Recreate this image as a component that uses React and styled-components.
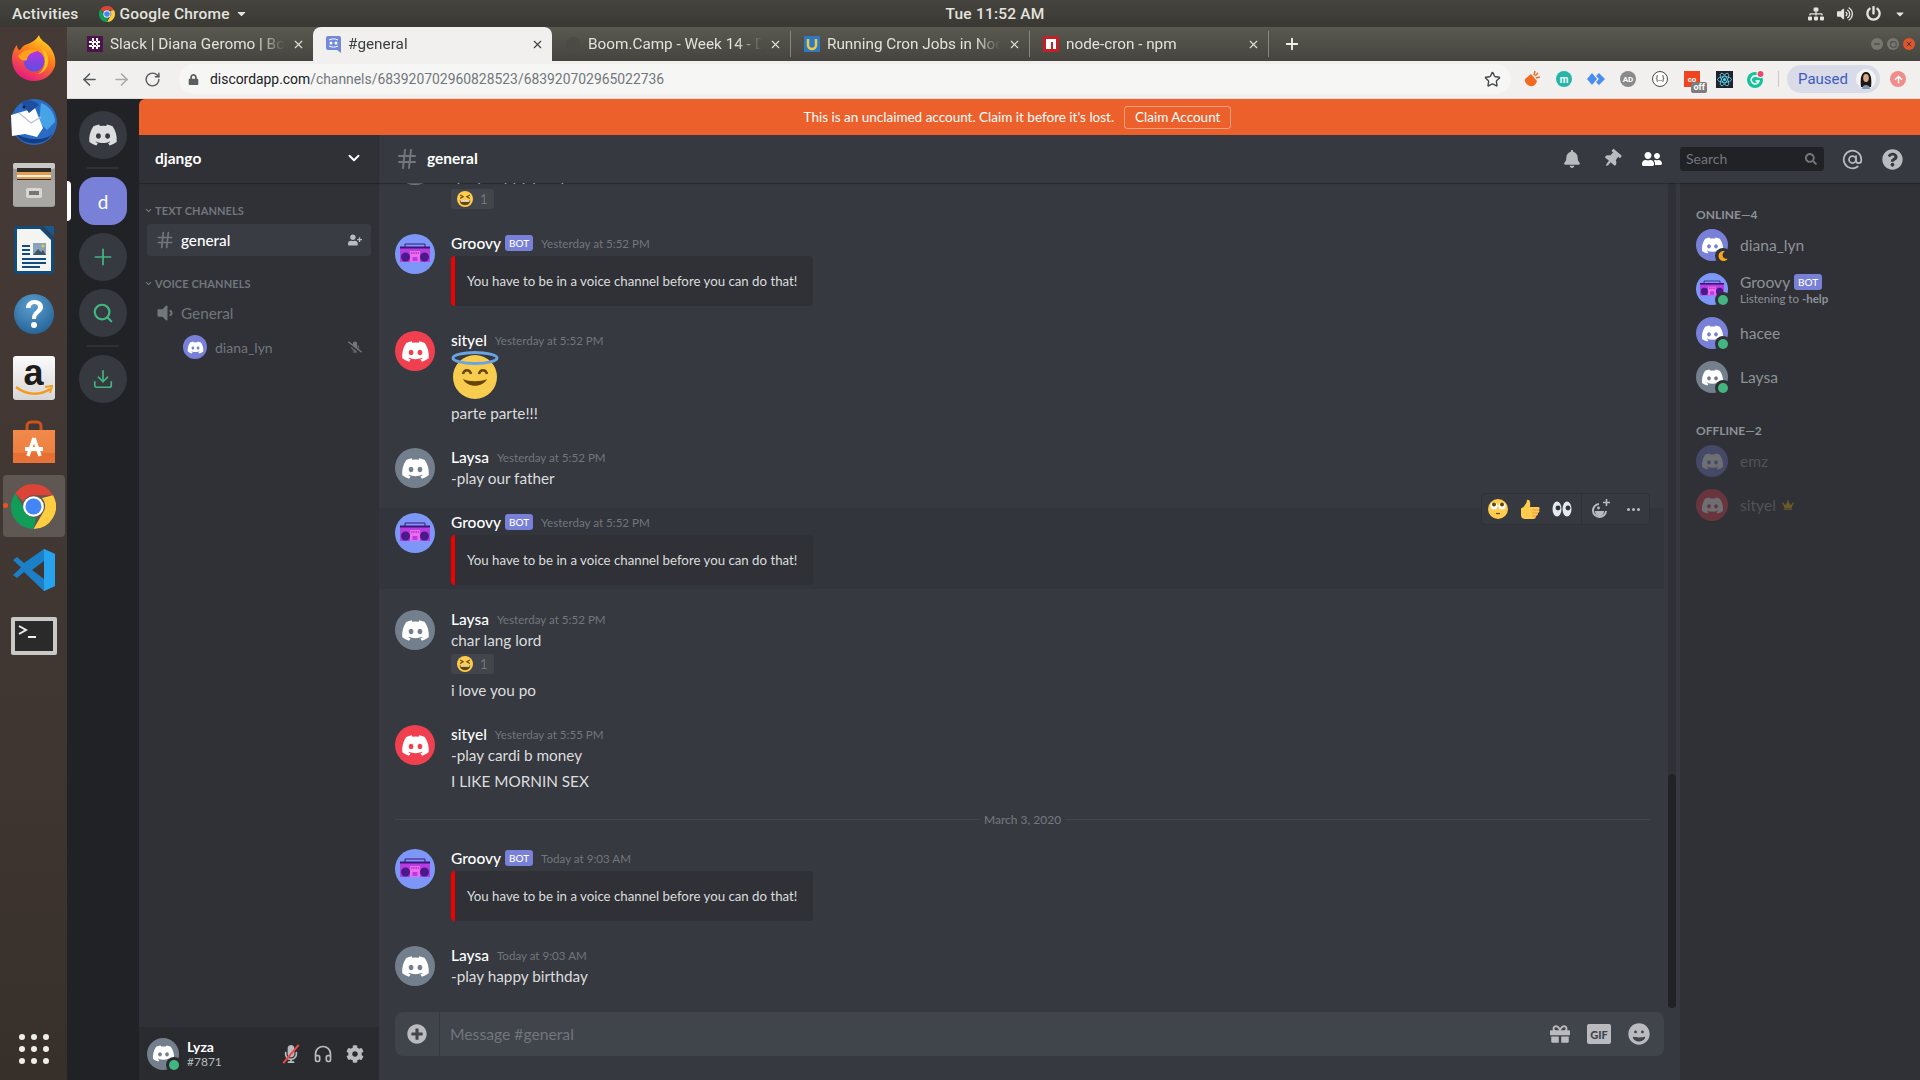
import React from 'react';
import styled, { createGlobalStyle } from 'styled-components';
import {
  FaDiscord, FaBell, FaThumbtack, FaUserFriends, FaSearch, FaQuestionCircle, FaGift, FaGrin,
  FaPlusCircle, FaCog, FaMicrophone, FaMicrophoneSlash, FaVolumeDown, FaVolumeUp, FaUserPlus, FaCrown, FaMoon,
  FaLock, FaCaretDown, FaPowerOff, FaSitemap, FaArrowUp,
} from 'react-icons/fa';
import {
  Hash, ArrowLeft, ArrowRight, RotateCw, ChevronDown, Star, Plus, X, Minus, Square, Headphones, AtSign, Download, Search,
} from 'lucide-react';

const UI = '"Lato", "Noto Sans", sans-serif';
const CHROME = 'Roboto, "Noto Sans", sans-serif';

const Global = createGlobalStyle`
  html, body { margin: 0; padding: 0; background: #202225; }
  * { box-sizing: border-box; }
`;

const Screen = styled.div`
  width: 1920px;
  height: 1080px;
  display: flex;
  flex-direction: column;
  overflow: hidden;
`;

/* ubuntu top bar */
const TopBar = styled.div`
  height: 27px;
  flex: none;
  display: flex;
  align-items: center;
  padding: 0 12px;
  background: linear-gradient(#45443e, #393833);
  color: #e4e3df;
  font: 500 15.500px ${CHROME};
  letter-spacing: .2px;
  position: relative;
`;
const TopAppName = styled.span`
  display: flex;
  align-items: center;
  gap: 5px;
  margin-left: 20px;
`;
const TopClock = styled.span`
  position: absolute;
  left: 938px;
  width: 114px;
  text-align: center;
`;
const TopTray = styled.div`
  margin-left: auto;
  display: flex;
  align-items: center;
  gap: 13px;
  color: #e4e3df;
  margin-right: 2px;
`;

const Desktop = styled.div`
  flex: 1;
  min-height: 0;
  display: flex;
`;

/* launcher */
const Dock = styled.div`
  width: 67px;
  flex: none;
  display: flex;
  flex-direction: column;
  align-items: center;
  gap: 2px;
  padding-bottom: 16px;
  background: linear-gradient(#453a36, #3f3531 70%, #37302a);
`;
const DockItem = styled.div`
  width: 62px;
  height: 62px;
  flex: none;
  display: flex;
  align-items: center;
  justify-content: center;
  border-radius: 4px;
  position: relative;
  margin-top: ${p => p.$top || 0}px;
  background: ${p => (p.$active ? 'rgba(255,255,255,.16)' : 'transparent')};
`;
const RunDot = styled.span`
  position: absolute;
  left: 0;
  top: 28px;
  width: 5px;
  height: 5px;
  border-radius: 50%;
  background: #e95420;
`;
const AppGrid = styled.div`
  margin-top: auto;
  display: grid;
  grid-template-columns: repeat(3, 6px);
  gap: 6px;
`;
const AppGridDot = styled.span`
  width: 6px;
  height: 6px;
  border-radius: 50%;
  background: #efeee9;
`;

const Browser = styled.div`
  flex: 1;
  min-width: 0;
  display: flex;
  flex-direction: column;
`;

/* chrome tabs */
const TabStrip = styled.div`
  height: 34px;
  flex: none;
  display: flex;
  align-items: stretch;
  padding-left: 7px;
  background: linear-gradient(#5a5950, #45443e);
  position: relative;
`;
const Tab = styled.div`
  width: 239px;
  flex: none;
  display: flex;
  align-items: center;
  gap: 7px;
  padding: 0 8px 0 13px;
  color: ${p => (p.$active ? '#3c4043' : '#e2e1dc')};
  font: 400 15.300px ${CHROME};
  background: ${p => (p.$active ? '#f1f0ee' : 'transparent')};
  border-radius: ${p => (p.$active ? '8px 8px 0 0' : '0')};
  border-right: ${p => (p.$sep ? '1px solid #88877f' : 'none')};
  margin: ${p => (p.$sep ? '4px 0' : '0')};
`;
const TabTitle = styled.span`
  flex: 1;
  min-width: 0;
  white-space: nowrap;
  overflow: hidden;
  -webkit-mask-image: linear-gradient(90deg, #000 85%, transparent);
  mask-image: linear-gradient(90deg, #000 85%, transparent);
`;
const NewTab = styled.div`
  width: 46px;
  display: flex;
  align-items: center;
  justify-content: center;
  color: #f1f0ee;
`;
const WindowButtons = styled.div`
  margin-left: auto;
  display: flex;
  align-items: center;
  gap: 4px;
  padding-right: 5px;
`;
const WindowButton = styled.span`
  width: 12px;
  height: 12px;
  border-radius: 50%;
  display: flex;
  align-items: center;
  justify-content: center;
  color: #3c3b37;
  background: ${p => p.$bg || '#77766f'};
`;

/* chrome toolbar */
const Toolbar = styled.div`
  height: 38px;
  flex: none;
  display: flex;
  align-items: center;
  padding: 0 0 1px 13px;
  background: #f1f0ee;
  color: #5f6368;
  border-bottom: 1px solid #dcdbd8;
`;
const NavButton = styled.span`
  width: 32px;
  display: flex;
  color: ${p => (p.$dim ? '#a9a9a9' : '#55585c')};
`;
const Omnibox = styled.div`
  width: 1332px;
  height: 30px;
  margin-left: 3px;
  display: flex;
  align-items: center;
  gap: 11px;
  padding: 0 10px 0 9px;
  border-radius: 15px;
  background: #f6f6f5;
  font: 400 13.900px ${CHROME};
  color: #72777c;
`;
const UrlHost = styled.span`
  color: #202124;
`;
const OmniStar = styled.span`
  margin-left: auto;
  display: flex;
  color: #45484c;
`;
const Extensions = styled.div`
  display: flex;
  align-items: center;
  margin-left: 5px;
`;
const Extension = styled.span`
  width: 32px;
  height: 20px;
  display: flex;
  align-items: center;
  justify-content: center;
  position: relative;
`;
const ExtensionDisc = styled.span`
  width: 16px;
  height: 16px;
  border-radius: 50%;
  display: flex;
  align-items: center;
  justify-content: center;
  background: ${p => p.$bg};
  color: ${p => p.$fg || '#fff'};
  border: ${p => (p.$ring ? '1.5px solid #4a4a4a' : 'none')};
  font: 700 ${p => p.$size || 10}px ${CHROME};
`;
const ExtensionSquare = styled(ExtensionDisc)`
  border-radius: 0;
`;
const OffBadge = styled.span`
  position: absolute;
  right: 1px;
  bottom: -4px;
  background: #7d7d7d;
  color: #fff;
  font: 700 9px ${CHROME};
  padding: 0 2px;
  border-radius: 2px;
  line-height: 11px;
`;
const ToolbarDivider = styled.span`
  width: 1px;
  height: 16px;
  margin: 0 8px 0 6px;
  background: #c9c8c5;
`;
const ProfilePill = styled.div`
  width: 93px;
  height: 28px;
  border-radius: 14px;
  display: flex;
  align-items: center;
  justify-content: space-between;
  padding: 0 4px 0 11px;
  background: #dadbe9;
  color: #3c5bc4;
  font: 400 15px ${CHROME};
`;
const UpdateButton = styled.span`
  width: 16px;
  height: 16px;
  margin-left: 10px;
  border-radius: 50%;
  background: #ee8d8a;
  color: #fff;
  display: flex;
  align-items: center;
  justify-content: center;
`;

/* discord */
const Discord = styled.div`
  flex: 1;
  min-height: 0;
  display: flex;
  background: #202225;
  font-family: ${UI};
`;
const GuildBar = styled.div`
  width: 72px;
  flex: none;
  display: flex;
  flex-direction: column;
  align-items: center;
  padding-top: 12px;
  position: relative;
`;
const GuildIcon = styled.div`
  width: 48px;
  height: 48px;
  flex: none;
  margin-bottom: ${p => p.$gap ?? 8}px;
  border-radius: ${p => (p.$selected ? '16px' : '50%')};
  background: ${p => (p.$selected ? '#7880d8' : '#36393f')};
  color: ${p => p.$fg || '#dcddde'};
  display: flex;
  align-items: center;
  justify-content: center;
  font-size: 19px;
  position: relative;
`;
const GuildPill = styled.span`
  position: absolute;
  left: -12px;
  top: 4px;
  width: 4px;
  height: 40px;
  border-radius: 0 4px 4px 0;
  background: #fff;
`;
const GuildSeparator = styled.div`
  width: 32px;
  height: 2px;
  margin: 0 0 ${p => p.$after}px;
  flex: none;
  background: #2f3136;
`;

const Workspace = styled.div`
  flex: 1;
  min-width: 0;
  display: flex;
  flex-direction: column;
  border-top-left-radius: 6px;
  overflow: hidden;
  background: #36393f;
`;
const Banner = styled.div`
  height: 36px;
  flex: none;
  display: flex;
  align-items: center;
  justify-content: center;
  gap: 10px;
  padding-right: 24px;
  background: #ec602c;
  color: #fff;
  font-size: 13.500px;
`;
const BannerButton = styled.span`
  height: 23px;
  padding: 0 10px;
  display: flex;
  align-items: center;
  border: 1px solid rgba(255,255,255,.4);
  border-radius: 3px;
`;
const Columns = styled.div`
  flex: 1;
  min-height: 0;
  display: flex;
`;

/* channel list */
const Sidebar = styled.div`
  width: 240px;
  flex: none;
  display: flex;
  flex-direction: column;
  background: #2f3136;
`;
const GuildHeader = styled.div`
  height: 48px;
  flex: none;
  display: flex;
  align-items: center;
  justify-content: space-between;
  padding: 0 16px 2px;
  color: #fff;
  font-size: 15.500px;
  font-weight: 700;
  box-shadow: 0 1px 0 rgba(4,4,5,.2), 0 1px 2px rgba(6,6,7,.1);
  position: relative;
`;
const ChannelScroll = styled.div`
  flex: 1;
  min-height: 0;
  padding: 19px 8px 0;
`;
const Category = styled.div`
  display: flex;
  align-items: center;
  height: 16px;
  gap: 2px;
  margin: 0 0 6px -3px;
  color: #72767d;
  font-size: 11px;
  font-weight: 700;
  letter-spacing: .1px;
  text-transform: uppercase;
`;
const ChannelRow = styled.div`
  height: 32px;
  display: flex;
  align-items: center;
  gap: 6px;
  padding: 0 9px 1px 8px;
  border-radius: 3px;
  margin-bottom: ${p => p.$after || 0}px;
  background: ${p => (p.$selected ? '#393c43' : 'transparent')};
  color: ${p => (p.$selected ? '#fff' : '#72767d')};
  font-size: 15.300px;
  font-weight: ${p => (p.$selected ? 500 : 400)};
`;
const RowAction = styled.span`
  margin-left: auto;
  display: flex;
  color: #b9bbbe;
`;
const VoiceUser = styled.div`
  height: 28px;
  display: flex;
  align-items: center;
  gap: 8px;
  margin: 4px 0 0 36px;
  padding-right: 9px;
  color: #72767d;
  font-size: 14px;
`;
const UserPanel = styled.div`
  height: 53px;
  flex: none;
  display: flex;
  align-items: center;
  padding: 0 8px;
  gap: 8px;
  background: #292b2f;
`;
const UserText = styled.div`
  display: flex;
  flex-direction: column;
  flex: 1;
`;
const UserName = styled.span`
  color: #fff;
  font-size: 14px;
  font-weight: 700;
  line-height: 16px;
`;
const UserTag = styled.span`
  color: #b9bbbe;
  font-size: 12px;
  line-height: 14px;
`;
const UserActions = styled.div`
  display: flex;
  align-items: center;
  gap: 13px;
  margin-right: 7px;
  color: #b9bbbe;
`;
const MutedMic = styled.span`
  display: flex;
  width: 18px;
  justify-content: center;
  color: #b9bbbe;
  position: relative;
`;
const MicSlash = styled.span`
  position: absolute;
  left: 8px;
  top: -3px;
  width: 2px;
  height: 24px;
  background: #f04747;
  transform: rotate(40deg);
`;

/* avatar */
const Avatar = styled.div`
  width: ${p => p.$size}px;
  height: ${p => p.$size}px;
  flex: none;
  border-radius: 50%;
  background: ${p => p.$bg};
  color: #fff;
  display: flex;
  align-items: center;
  justify-content: center;
  position: relative;
  opacity: ${p => p.$dim ? 0.3 : 1};
`;
const Status = styled.span`
  position: absolute;
  right: -3px;
  bottom: -3px;
  width: 16px;
  height: 16px;
  border-radius: 50%;
  background: ${p => p.$ring};
  display: flex;
  align-items: center;
  justify-content: center;
  color: #faa61a;
  &::after {
    content: '';
    display: ${p => (p.$idle ? 'none' : 'block')};
    width: 10px;
    height: 10px;
    border-radius: 50%;
    background: #43b581;
  }
`;

/* chat */
const Chat = styled.div`
  flex: 1;
  min-width: 0;
  display: flex;
  flex-direction: column;
`;
const ChatHeader = styled.div`
  height: 48px;
  flex: none;
  display: flex;
  align-items: center;
  padding: 0 16px;
  box-shadow: 0 1px 0 rgba(4,4,5,.2), 0 1px 2px rgba(6,6,7,.1);
  position: relative;
  z-index: 1;
`;
const ChannelTitle = styled.span`
  margin-left: 8px;
  padding-bottom: 2px;
  color: #fff;
  font-size: 15.500px;
  font-weight: 700;
`;
const HeaderIcons = styled.div`
  margin-left: auto;
  display: flex;
  align-items: center;
  margin-right: -8px;
`;
const HeaderIcon = styled.span`
  width: 40px;
  display: flex;
  justify-content: center;
  color: ${p => (p.$on ? '#fff' : '#b9bbbe')};
`;
const TiltedPin = styled(FaThumbtack)`
  transform: rotate(40deg);
`;
const SearchBox = styled.div`
  width: 144px;
  height: 24px;
  margin: 0 8px;
  display: flex;
  align-items: center;
  justify-content: space-between;
  padding: 0 7px 1px 6px;
  border-radius: 3px;
  background: #202225;
  color: #72767d;
  font-size: 14px;
`;
const ChatBody = styled.div`
  flex: 1;
  min-height: 0;
  display: flex;
`;
const ChatMain = styled.div`
  width: 1301px;
  flex: none;
  display: flex;
  flex-direction: column;
  position: relative;
`;
const MessageArea = styled.div`
  flex: 1;
  min-height: 0;
  display: flex;
`;
const MessageList = styled.div`
  width: 1285px;
  flex: none;
  overflow: hidden;
`;
const Track = styled.div`
  width: 8px;
  flex: none;
  margin: 0 4px 0 4px;
  display: flex;
  flex-direction: column;
  justify-content: flex-end;
  background: #2f3136;
  border-radius: 4px;
`;
const Thumb = styled.div`
  height: 234px;
  border-radius: 4px;
  background: #202225;
`;
const Group = styled.div`
  display: flex;
  gap: 16px;
  padding: 0 16px;
  margin-top: ${p => p.$top ?? 21}px;
  position: relative;
  ${p => p.$hover && 'background: #32353b; box-shadow: 0 -3px 0 #32353b, 0 2px 0 #32353b;'}
`;
const AvatarSlot = styled.div`
  padding-top: 2px;
  flex: none;
`;
const GroupContent = styled.div`
  min-width: 0;
  flex: 1;
`;
const GroupHeader = styled.div`
  height: 22px;
  display: flex;
  align-items: center;
  gap: 6px;
  padding-bottom: 1px;
`;
const AuthorName = styled.span`
  color: #fff;
  font-size: 15.500px;
  font-weight: 500;
`;
const Timestamp = styled.span`
  color: #72767d;
  font-size: 11.600px;
  margin-left: 2px;
  padding-top: 2px;
`;
const BotTag = styled.span`
  width: 28px;
  height: 16px;
  display: inline-flex;
  align-items: center;
  justify-content: center;
  border-radius: 3px;
  background: #7880d8;
  color: #fff;
  font-size: 10px;
  font-weight: 500;
`;
const AuthorBot = styled(BotTag)`
  margin-left: -2px;
`;
const Line = styled.div`
  height: 22px;
  line-height: 21px;
  color: #dcddde;
  font-size: 15.300px;
  margin-top: ${p => p.$top || 0}px;
`;
const Embed = styled.div`
  width: 362px;
  height: 50px;
  margin: 2px 0;
  padding: 0 12px;
  display: flex;
  align-items: center;
  border-left: 4px solid #f00000;
  border-radius: 4px;
  background: #2f3136;
  color: #dcddde;
  font-size: 13.250px;
  white-space: nowrap;
`;
const Reaction = styled.div`
  width: 43px;
  height: 20px;
  margin: 2px 0;
  padding-left: 6px;
  display: flex;
  align-items: center;
  gap: 7px;
  border-radius: 3px;
  background: #42454b;
  color: #72767d;
  font-size: 13px;
`;
const BigEmoji = styled.div`
  height: 48px;
  display: flex;
`;
const MessageActions = styled.div`
  position: absolute;
  right: 14px;
  top: -18px;
  width: 169px;
  height: 32px;
  display: flex;
  align-items: center;
  border-radius: 4px;
  border: 1px solid #2f3136;
  background: #36393f;
`;
const ActionSlot = styled.span`
  width: 32px;
  display: flex;
  justify-content: center;
  color: #b9bbbe;
`;
const ActionDivider = styled.span`
  width: 1px;
  height: 30px;
  margin: 0 3px 0 3px;
  background: #2f3136;
`;
const Dots = styled.span`
  display: flex;
  gap: 2px;
`;
const Dot = styled.span`
  width: 3px;
  height: 3px;
  border-radius: 50%;
  background: #b9bbbe;
`;
const DateDivider = styled.div`
  height: 16px;
  margin: 18px 14px -1px 16px;
  display: flex;
  align-items: center;
  gap: 4px;
  color: #72767d;
  font-size: 12px;
  font-weight: 500;
  &::before, &::after {
    content: '';
    flex: 1;
    height: 1px;
    background: #42454a;
  }
`;
const Composer = styled.div`
  height: 72px;
  flex: none;
  padding: 4px 16px 0;
`;
const ComposerBox = styled.div`
  height: 44px;
  display: flex;
  align-items: center;
  border-radius: 8px;
  background: #40444b;
  color: #72767d;
  font-size: 15.700px;
`;
const ComposerPlus = styled.div`
  width: 45px;
  height: 44px;
  flex: none;
  display: flex;
  align-items: center;
  justify-content: center;
  border-right: 1px solid #36393f;
  color: #b9bbbe;
`;
const ComposerText = styled.div`
  flex: 1;
  padding: 0 0 1px 10px;
`;
const ComposerIcons = styled.div`
  display: flex;
  align-items: center;
  gap: 17px;
  padding-right: 14px;
  color: #b9bbbe;
`;
const GifIcon = styled.span`
  width: 24px;
  height: 20px;
  border-radius: 2px;
  background: #b9bbbe;
  color: #40444b;
  display: flex;
  align-items: center;
  justify-content: center;
  font-size: 11px;
  font-weight: 900;
`;

/* members */
const Members = styled.div`
  width: 240px;
  flex: none;
  background: #2f3136;
  padding: 24px 8px 0;
`;
const MemberCategory = styled.div`
  height: 16px;
  line-height: 16px;
  margin: ${p => p.$top || 0}px 0 0 8px;
  color: #8e9297;
  font-size: 12px;
  font-weight: 700;
  text-transform: uppercase;
`;
const MemberRow = styled.div`
  height: 44px;
  display: flex;
  align-items: center;
  gap: 12px;
  padding-left: 8px;
`;
const MemberText = styled.div`
  display: flex;
  flex-direction: column;
  min-width: 0;
`;
const MemberName = styled.div`
  display: flex;
  align-items: center;
  gap: 4px;
  color: ${p => (p.$dim ? '#4f5258' : '#8e9297')};
  font-size: 15.600px;
  line-height: 20px;
`;
const MemberActivity = styled.div`
  color: #8e9297;
  font-size: 11.500px;
  line-height: 14px;
`;
const CrownMark = styled.span`
  display: flex;
  color: #6a5a2a;
  margin-left: 2px;
`;

/* drawings */
const Firefox = () => (
  <svg width="46" height="46" viewBox="0 0 46 46">
    <defs>
      <linearGradient id="ff1" x1=".8" y1="0" x2=".3" y2="1">
        <stop offset="0" stopColor="#ffe226" /><stop offset=".45" stopColor="#ff7a18" /><stop offset="1" stopColor="#e31587" />
      </linearGradient>
      <linearGradient id="ff2" x1="0" y1="0" x2="0" y2="1">
        <stop offset="0" stopColor="#b833e1" /><stop offset="1" stopColor="#5b4fe0" />
      </linearGradient>
    </defs>
    <path d="M28 0c1 5 6 7 10 11 6 7 7 14 6 20-3 9-11 15-21 15C10 46 1 36 1 24c0-5 2-11 5-14 0 3 1 5 3 5 2-4 6-6 8-6 5-2 9-5 11-9z" fill="url(#ff1)" />
    <circle cx="23" cy="26" r="10.500" fill="url(#ff2)" />
    <path d="M7 21c5-6 13-8 20-5-6 1-11 4-11 9-4 2-7-1-9-4z" fill="#ff9f1c" />
    <path d="M30 13c5 3 8 8 7 15-1 6-5 10-10 11 5-3 7-8 7-13 0-5-2-9-4-13z" fill="#ffc21f" />
  </svg>
);
const Thunderbird = () => (
  <svg width="50" height="50" viewBox="0 0 50 50">
    <circle cx="25" cy="25" r="23" fill="#2a6cc4" />
    <path d="M6 36C14 50 36 50 44 36 38 44 18 44 6 36z" fill="#163d83" />
    <path d="M32 6c8 3 14 10 14 19l-8 8-8-8z" fill="#47a3e8" />
    <path d="M2 18l24-7 8 20-6 9-12-3-13 2z" fill="#fff" />
    <path d="M10 16l12 10 10-6" fill="none" stroke="#b9c2ce" strokeWidth="1.2" />
    <path d="M12 5c6-3 14-2 18 3l-10 8z" fill="#1f4e9e" />
    <circle cx="15" cy="10" r="1.5" fill="#0c1e3d" />
  </svg>
);
const FileCabinet = () => (
  <svg width="42" height="46" viewBox="0 0 42 46">
    <rect x="0" y="0" width="42" height="44" rx="3" fill="#9c9b97" />
    <rect x="0" y="0" width="42" height="6" rx="2" fill="#c9c8c4" />
    <rect x="4" y="5" width="34" height="13" fill="#2d2c2a" />
    <rect x="4" y="9" width="34" height="7" fill="#e89a4d" />
    <rect x="4" y="12" width="34" height="2" fill="#fff2de" />
    <rect x="0" y="17" width="42" height="26" rx="2" fill="#a9a8a4" />
    <rect x="13" y="25" width="16" height="10" rx="2" fill="#d8d7d3" />
    <rect x="16" y="28" width="10" height="4" fill="#77766f" />
  </svg>
);
const Writer = () => (
  <svg width="40" height="48" viewBox="0 0 40 48">
    <path d="M3 0h24l13 13v32a3 3 0 0 1-3 3H3a3 3 0 0 1-3-3V3a3 3 0 0 1 3-3z" fill="#124c7a" />
    <path d="M3 3h23l11 11v31H3z" fill="#f4f4f0" />
    <path d="M29 0h11v11z" fill="#18598f" />
    <path d="M8 20h8M8 24h8M8 28h8M8 33h24M8 37h24M8 41h18" stroke="#124c7a" strokeWidth="2" />
    <rect x="19" y="17" width="13" height="12" fill="#8aa3b8" />
    <path d="M19 29l5-6 3 3 2-2 3 5z" fill="#3d5568" />
    <circle cx="29" cy="20" r="1.5" fill="#f2c14e" />
  </svg>
);
const HelpBall = () => (
  <svg width="40" height="40" viewBox="0 0 40 40">
    <defs>
      <radialGradient id="hb" cx=".45" cy=".3" r=".8">
        <stop offset="0" stopColor="#5d9fd0" /><stop offset="1" stopColor="#1f5d90" />
      </radialGradient>
    </defs>
    <circle cx="20" cy="20" r="20" fill="url(#hb)" />
    <path d="M12 14c0-5 4-8 8.500-8 5 0 8.500 3 8.500 7 0 6-7 6-7 12h-4c0-8 6-8 6-12 0-2-2-3-3.500-3-2 0-4 1.500-4 4z" fill="#fff" />
    <circle cx="20" cy="31" r="3" fill="#fff" />
  </svg>
);
const AmazonBox = styled.div`
  width: 42px;
  height: 44px;
  border-radius: 3px;
  background: linear-gradient(#fbfbfb, #d6d6d6);
  color: #1c1c1c;
  display: flex;
  justify-content: center;
  position: relative;
  font: 700 36px/34px "Liberation Sans", sans-serif;
`;
const AmazonSmile = styled.svg`
  position: absolute;
  left: 2px;
  bottom: 3px;
`;
const Amazon = () => (
  <AmazonBox>
    a
    <AmazonSmile width="38" height="12" viewBox="0 0 38 12">
      <path d="M1 2c10 8 24 9 34 2" fill="none" stroke="#f39a1f" strokeWidth="2.4" />
      <path d="M30 2l7-1-2 7" fill="none" stroke="#f39a1f" strokeWidth="2" />
    </AmazonSmile>
  </AmazonBox>
);
const SoftwareBag = () => (
  <svg width="42" height="44" viewBox="0 0 42 44">
    <defs>
      <linearGradient id="bag" x1="0" y1="0" x2="0" y2="1">
        <stop offset="0" stopColor="#f08a4b" /><stop offset=".7" stopColor="#ee7f3f" /><stop offset=".71" stopColor="#e66f30" /><stop offset="1" stopColor="#e8743a" />
      </linearGradient>
    </defs>
    <path d="M14 14V6a4 4 0 0 1 4-4h6a4 4 0 0 1 4 4v8" fill="none" stroke="#c9531f" strokeWidth="3" />
    <path d="M0 10h42v33H0z" fill="url(#bag)" />
    <path d="M21 18l-6 18M21 18l6 18" stroke="#fff" strokeWidth="3.500" fill="none" />
    <rect x="12" y="27" width="18" height="4" fill="#fff" />
  </svg>
);
const ChromeLogo = ({ size }) => (
  <svg width={size} height={size} viewBox="0 0 48 48">
    <path d="M24 0a24 24 0 0 1 20.800 12H24a12 12 0 0 0-11 7L4.500 9.800A24 24 0 0 1 24 0z" fill="#db4437" />
    <path d="M44.800 12A24 24 0 0 1 24 48l10.400-18A12 12 0 0 0 33 15z" fill="#ffcd40" />
    <path d="M24 48A24 24 0 0 1 4.500 9.800L13 24a12 12 0 0 0 14 11.600z" fill="#0f9d58" />
    <circle cx="24" cy="24" r="11" fill="#fff" />
    <circle cx="24" cy="24" r="8.500" fill="#4285f4" />
  </svg>
);
const VSCode = () => (
  <svg width="44" height="44" viewBox="0 0 44 44">
    <path d="M32 1l11 5v32l-11 5-20-19-7 6-4-3 8-7.500L1 12l4-3 7 6z" fill="#1b80c8" />
    <path d="M32 1l11 5v32l-11 5z" fill="#27a3ee" />
    <path d="M32 13L20 22l12 9z" fill="#3f3531" />
  </svg>
);
const Terminal = () => (
  <svg width="46" height="38" viewBox="0 0 46 38">
    <rect width="46" height="38" rx="2" fill="#c9c9c6" />
    <rect x="4" y="4" width="38" height="30" fill="#2a2a2a" />
    <path d="M8 9l7 4-7 4" fill="none" stroke="#eee" strokeWidth="2" />
    <path d="M17 20h8" stroke="#eee" strokeWidth="2" />
  </svg>
);
const SlackIcon = () => (
  <svg width="16" height="16" viewBox="0 0 16 16">
    <rect width="16" height="16" fill="#4a154b" />
    <path d="M6 2v12M10 2v12M2 6h12M2 10h12" stroke="#fff" strokeWidth="2" strokeDasharray="3 1" />
  </svg>
);
const DiscordTabIcon = () => (
  <svg width="15" height="17" viewBox="0 0 15 17">
    <path d="M2 0h11a2 2 0 0 1 2 2v15l-4-3H2a2 2 0 0 1-2-2V2a2 2 0 0 1 2-2z" fill="#7289da" />
    <circle cx="5" cy="7" r="1.500" fill="#fff" /><circle cx="10" cy="7" r="1.500" fill="#fff" />
    <path d="M3 4c3-1.500 6-1.500 9 0M3 10c3 1.500 6 1.500 9 0" stroke="#fff" fill="none" />
  </svg>
);
const CircleIcon = () => (
  <svg width="16" height="16" viewBox="0 0 16 16"><circle cx="8" cy="8" r="7" fill="#4b4a45" /></svg>
);
const UdemyIcon = () => (
  <svg width="16" height="16" viewBox="0 0 16 16">
    <rect width="16" height="16" fill="#2f78c4" />
    <path d="M4 3v6a4 4 0 0 0 8 0V3" fill="none" stroke="#f0c93a" strokeWidth="2.500" />
  </svg>
);
const NpmIcon = () => (
  <svg width="16" height="16" viewBox="0 0 16 16">
    <rect width="16" height="16" fill="#c12127" />
    <path d="M3 3h10v10h-3V6H8v7H3z" fill="#fff" />
  </svg>
);

const Boombox = ({ size }) => (
  <svg width={size} height={size} viewBox="0 0 40 40">
    <circle cx="20" cy="20" r="20" fill="#7d97f9" />
    <path d="M10 13V10h20v3" fill="none" stroke="#3e1576" strokeWidth="1" />
    <rect x="5" y="13" width="30" height="15" fill="#b53ee0" />
    <rect x="5" y="12.500" width="30" height="2" fill="#3e1576" />
    <circle cx="10.500" cy="23" r="4.500" fill="#4a1a8a" />
    <circle cx="29.500" cy="23" r="4.500" fill="#4a1a8a" />
    <rect x="15" y="17" width="10" height="11" fill="#f06af0" />
    <path d="M16 19h8" stroke="#7a1fa0" strokeWidth="1" strokeDasharray="1.500 .8" />
    <rect x="17.500" y="23" width="5" height="4" fill="#b53ee0" />
  </svg>
);
const LaughEmoji = ({ size = 16 }) => (
  <svg width={size} height={size} viewBox="0 0 36 36">
    <circle cx="18" cy="18" r="18" fill="#ffcc4d" />
    <path d="M6 21c0 7 5 11 12 11s12-4 12-11z" fill="#664500" />
    <path d="M8 21h20v3H8z" fill="#fff" />
    <path d="M7 9l7 4-7 4M29 9l-7 4 7 4" fill="none" stroke="#664500" strokeWidth="2.500" />
  </svg>
);
const HaloEmoji = () => (
  <svg width="48" height="48" viewBox="0 0 48 48">
    <circle cx="24" cy="26" r="22" fill="#f8cd4f" />
    <ellipse cx="24" cy="7" rx="22" ry="5.500" fill="none" stroke="#6ba4e0" strokeWidth="3" />
    <path d="M12 23c1-5 7-5 8 0M28 23c1-5 7-5 8 0" fill="none" stroke="#664500" strokeWidth="2.400" />
    <path d="M12 28c4 9 20 9 24 0-6 3-18 3-24 0z" fill="#664500" />
  </svg>
);
const RollEmoji = () => (
  <svg width="20" height="20" viewBox="0 0 20 20">
    <circle cx="10" cy="10" r="10" fill="#ffcc4d" />
    <circle cx="6" cy="7" r="3.500" fill="#fff" /><circle cx="14" cy="7" r="3.500" fill="#fff" />
    <circle cx="6" cy="5.500" r="2" fill="#664500" /><circle cx="14" cy="5.500" r="2" fill="#664500" />
    <path d="M8 14.500h4" stroke="#664500" strokeWidth="1.200" />
  </svg>
);
const ThumbEmoji = () => (
  <svg width="20" height="20" viewBox="0 0 20 20">
    <path d="M1 10c0-1 1-1.500 2-1.500C5 6 7 4 7 1c2-1 4 1 3 7h8c2 0 2 2 1 3 1 1 0 3-1 3 0 2-1 3-2 3 0 2-1 3-3 3H6c-3 0-5-1-5-4z" fill="#ffcc4d" />
    <path d="M12 11h7M12 14h6M12 17h4" stroke="#ee9547" strokeWidth="1.200" />
  </svg>
);
const EyesEmoji = () => (
  <svg width="20" height="20" viewBox="0 0 20 20">
    <ellipse cx="5" cy="10" rx="4.500" ry="7.500" fill="#e6e9ed" />
    <ellipse cx="15" cy="10" rx="4.500" ry="7.500" fill="#e6e9ed" />
    <circle cx="6" cy="9" r="2.400" fill="#2c3640" /><circle cx="16" cy="9" r="2.400" fill="#2c3640" />
  </svg>
);
const AddReaction = () => (
  <svg width="20" height="20" viewBox="0 0 20 20">
    <path d="M8 4a7.500 7.500 0 1 0 8 8h-2a5.500 5.500 0 1 1-6-6z" fill="#b9bbbe" />
    <path d="M4 12h9c0 3-2 5-4.500 5S4 15 4 12z" fill="#b9bbbe" />
    <circle cx="7.500" cy="9" r="1.400" fill="#b9bbbe" />
    <path d="M15.500 0v7M12 3.500h7" stroke="#b9bbbe" strokeWidth="1.600" />
  </svg>
);
const ReactIcon = () => (
  <svg width="17" height="17" viewBox="0 0 17 17">
    <rect width="17" height="17" fill="#20232a" />
    <circle cx="8.500" cy="8.500" r="1.500" fill="#61dafb" />
    <g fill="none" stroke="#61dafb" strokeWidth=".8">
      <ellipse cx="8.500" cy="8.500" rx="7" ry="2.800" />
      <ellipse cx="8.500" cy="8.500" rx="7" ry="2.800" transform="rotate(60 8.500 8.500)" />
      <ellipse cx="8.500" cy="8.500" rx="7" ry="2.800" transform="rotate(120 8.500 8.500)" />
    </g>
  </svg>
);
const BeakerIcon = () => (
  <svg width="18" height="18" viewBox="0 0 18 18">
    <path d="M2 9l6-5 6 7c-1 4-4 6-7 5s-6-4-5-7z" fill="#f26a21" />
    <path d="M12 1l-1 4M15 3l-3 3M17 7l-4 1" stroke="#f26a21" strokeWidth="1.500" />
  </svg>
);
const DiamondsIcon = () => (
  <svg width="18" height="14" viewBox="0 0 18 14">
    <path d="M5 1l5 6-5 6-5-6z" fill="#4a8cf0" />
    <path d="M12 1l6 6-6 6-3-3 3-3-3-3z" fill="#4a8cf0" />
  </svg>
);
const GrammarlyIcon = () => (
  <svg width="18" height="18" viewBox="0 0 18 18">
    <circle cx="8" cy="10" r="8" fill="#15c39a" />
    <path d="M11 7a4 4 0 1 0 1 4H8.500" fill="none" stroke="#fff" strokeWidth="1.600" />
    <circle cx="13.500" cy="4" r="4" fill="#fff" />
    <circle cx="13.500" cy="4" r="3" fill="#e94b6a" />
  </svg>
);
const Portrait = () => (
  <svg width="20" height="20" viewBox="0 0 20 20">
    <circle cx="10" cy="10" r="10" fill="#f4f4f4" />
    <path d="M5 18c-1-8 0-15 5-15s6 7 5 15z" fill="#1c1715" />
    <ellipse cx="10" cy="9" rx="2.800" ry="4" fill="#d9a98c" />
    <path d="M6 20c0-3 2-4 4-4s4 1 4 4z" fill="#7c9bb0" />
  </svg>
);

const Clyde = ({ size, bg, dim, children }) => (
  <Avatar $size={size} $bg={bg} $dim={dim}>
    <FaDiscord size={Math.round(size * 0.72)} />
    {children}
  </Avatar>
);

const BLURPLE = '#7880d8';
const GREY = '#747f8d';
const RED = '#f04050';

const Message = ({ avatar, name, time, bot, top, hover, children }) => (
  <Group $top={top} $hover={hover}>
    <AvatarSlot>
      {avatar === 'bot' ? <Boombox size={40} /> : <Clyde size={40} bg={avatar} />}
    </AvatarSlot>
    <GroupContent>
      <GroupHeader>
        <AuthorName>{name}</AuthorName>
        {bot && <AuthorBot>BOT</AuthorBot>}
        <Timestamp>{time}</Timestamp>
      </GroupHeader>
      {children}
    </GroupContent>
    {hover && (
      <MessageActions>
        <ActionSlot><RollEmoji /></ActionSlot>
        <ActionSlot><ThumbEmoji /></ActionSlot>
        <ActionSlot><EyesEmoji /></ActionSlot>
        <ActionDivider />
        <ActionSlot><AddReaction /></ActionSlot>
        <ActionSlot><Dots><Dot /><Dot /><Dot /></Dots></ActionSlot>
      </MessageActions>
    )}
  </Group>
);

const VOICE_ERROR = 'You have to be in a voice channel before you can do that!';
const LaughReaction = () => (
  <Reaction><LaughEmoji />1</Reaction>
);

const TABS = [
  { title: 'Slack | Diana Geromo | Boom.Camp', icon: <SlackIcon /> },
  { title: '#general', icon: <DiscordTabIcon />, active: true },
  { title: 'Boom.Camp - Week 14 - Day 1', icon: <CircleIcon />, sep: true },
  { title: 'Running Cron Jobs in Node.js', icon: <UdemyIcon />, sep: true },
  { title: 'node-cron - npm', icon: <NpmIcon />, sep: true },
];

export default function App() {
  return (
    <Screen>
      <Global />
      <TopBar>
        Activities
        <TopAppName>
          <ChromeLogo size={16} />
          Google Chrome
          <FaCaretDown size={13} />
        </TopAppName>
        <TopClock>Tue 11:52 AM</TopClock>
        <TopTray>
          <FaSitemap size={16} />
          <FaVolumeUp size={16} />
          <FaPowerOff size={15} />
          <FaCaretDown size={12} />
        </TopTray>
      </TopBar>
      <Desktop>
        <Dock>
          <DockItem><Firefox /></DockItem>
          <DockItem><Thunderbird /></DockItem>
          <DockItem><FileCabinet /></DockItem>
          <DockItem><Writer /></DockItem>
          <DockItem><HelpBall /></DockItem>
          <DockItem><Amazon /></DockItem>
          <DockItem><SoftwareBag /></DockItem>
          <DockItem $active><RunDot /><ChromeLogo size={45} /></DockItem>
          <DockItem><VSCode /></DockItem>
          <DockItem $top={2}><Terminal /></DockItem>
          <AppGrid>
            {Array.from({ length: 9 }, (_, i) => <AppGridDot key={i} />)}
          </AppGrid>
        </Dock>
        <Browser>
          <TabStrip>
            {TABS.map(t => (
              <Tab key={t.title} $active={t.active} $sep={t.sep}>
                {t.icon}
                <TabTitle>{t.title}</TabTitle>
                <X size={13} strokeWidth={2} />
              </Tab>
            ))}
            <NewTab><Plus size={18} strokeWidth={2.5} /></NewTab>
            <WindowButtons>
              <WindowButton><Minus size={8} strokeWidth={3} /></WindowButton>
              <WindowButton><Square size={7} strokeWidth={2.5} /></WindowButton>
              <WindowButton $bg="#e2552c"><X size={8} strokeWidth={3} /></WindowButton>
            </WindowButtons>
          </TabStrip>
          <Toolbar>
            <NavButton><ArrowLeft size={19} /></NavButton>
            <NavButton $dim><ArrowRight size={19} /></NavButton>
            <NavButton><RotateCw size={17} /></NavButton>
            <Omnibox>
              <FaLock size={11} color="#5a5d61" />
              <span><UrlHost>discordapp.com</UrlHost>/channels/683920702960828523/683920702965022736</span>
              <OmniStar><Star size={17} /></OmniStar>
            </Omnibox>
            <Extensions>
              <Extension><BeakerIcon /></Extension>
              <Extension><ExtensionDisc $bg="#27b5a6">m</ExtensionDisc></Extension>
              <Extension><DiamondsIcon /></Extension>
              <Extension><ExtensionDisc $bg="#8a8a8a" $size={8}>AD</ExtensionDisc></Extension>
              <Extension><ExtensionDisc $bg="#fff" $fg="#444" $ring $size={7}>{'{..}'}</ExtensionDisc></Extension>
              <Extension><ExtensionSquare $bg="#f0431f" $size={8}>co</ExtensionSquare><OffBadge>off</OffBadge></Extension>
              <Extension><ReactIcon /></Extension>
              <Extension><GrammarlyIcon /></Extension>
            </Extensions>
            <ToolbarDivider />
            <ProfilePill>
              Paused
              <Portrait />
            </ProfilePill>
            <UpdateButton><FaArrowUp size={9} /></UpdateButton>
          </Toolbar>
          <Discord>
            <GuildBar>
              <GuildIcon $gap={8}><FaDiscord size={30} /></GuildIcon>
              <GuildSeparator $after={8} />
              <GuildIcon $selected $fg="#fff"><GuildPill />d</GuildIcon>
              <GuildIcon $fg="#43b581"><Plus size={26} strokeWidth={1.6} /></GuildIcon>
              <GuildIcon $gap={8} $fg="#43b581"><Search size={22} strokeWidth={2.4} /></GuildIcon>
              <GuildSeparator $after={8} />
              <GuildIcon $fg="#43b581"><Download size={22} strokeWidth={1.8} /></GuildIcon>
            </GuildBar>
            <Workspace>
              <Banner>
                This is an unclaimed account. Claim it before it's lost.
                <BannerButton>Claim Account</BannerButton>
              </Banner>
              <Columns>
                <Sidebar>
                  <GuildHeader>
                    django
                    <ChevronDown size={18} strokeWidth={2.5} />
                  </GuildHeader>
                  <ChannelScroll>
                    <Category><ChevronDown size={9} strokeWidth={3} />Text Channels</Category>
                    <ChannelRow $selected $after={19}>
                      <Hash size={20} color="#72767d" />
                      general
                      <RowAction><FaUserPlus size={14} /></RowAction>
                    </ChannelRow>
                    <Category><ChevronDown size={9} strokeWidth={3} />Voice Channels</Category>
                    <ChannelRow>
                      <FaVolumeDown size={20} />
                      General
                    </ChannelRow>
                    <VoiceUser>
                      <Clyde size={24} bg={BLURPLE} />
                      diana_lyn
                      <RowAction><FaMicrophoneSlash size={14} color="#72767d" /></RowAction>
                    </VoiceUser>
                  </ChannelScroll>
                  <UserPanel>
                    <Clyde size={32} bg={GREY}>
                      <Status $ring="#292b2f" />
                    </Clyde>
                    <UserText>
                      <UserName>Lyza</UserName>
                      <UserTag>#7871</UserTag>
                    </UserText>
                    <UserActions>
                      <MutedMic><FaMicrophone size={18} /><MicSlash /></MutedMic>
                      <Headphones size={20} />
                      <FaCog size={18} />
                    </UserActions>
                  </UserPanel>
                </Sidebar>
                <Chat>
                  <ChatHeader>
                    <Hash size={24} color="#72767d" />
                    <ChannelTitle>general</ChannelTitle>
                    <HeaderIcons>
                      <HeaderIcon><FaBell size={18} /></HeaderIcon>
                      <HeaderIcon><TiltedPin size={18} /></HeaderIcon>
                      <HeaderIcon $on><FaUserFriends size={20} /></HeaderIcon>
                      <SearchBox>Search<FaSearch size={12} /></SearchBox>
                      <HeaderIcon><AtSign size={21} /></HeaderIcon>
                      <HeaderIcon><FaQuestionCircle size={21} /></HeaderIcon>
                    </HeaderIcons>
                  </ChatHeader>
                  <ChatBody>
                    <ChatMain>
                      <MessageArea>
                        <MessageList>
                          <Message top={-40} avatar={GREY} name="Laysa" time="Yesterday at 5:52 PM">
                            <Line>-play happy party</Line>
                            <LaughReaction />
                          </Message>
                          <Message avatar="bot" name="Groovy" bot time="Yesterday at 5:52 PM">
                            <Embed>{VOICE_ERROR}</Embed>
                          </Message>
                          <Message avatar={RED} name="sityel" time="Yesterday at 5:52 PM">
                            <BigEmoji><HaloEmoji /></BigEmoji>
                            <Line $top={4}>parte parte!!!</Line>
                          </Message>
                          <Message avatar={GREY} name="Laysa" time="Yesterday at 5:52 PM">
                            <Line>-play our father</Line>
                          </Message>
                          <Message hover avatar="bot" name="Groovy" bot time="Yesterday at 5:52 PM">
                            <Embed>{VOICE_ERROR}</Embed>
                          </Message>
                          <Message avatar={GREY} name="Laysa" time="Yesterday at 5:52 PM">
                            <Line>char lang lord</Line>
                            <LaughReaction />
                            <Line $top={6}>i love you po</Line>
                          </Message>
                          <Message avatar={RED} name="sityel" time="Yesterday at 5:55 PM">
                            <Line>-play cardi b money</Line>
                            <Line $top={4}>I LIKE MORNIN SEX</Line>
                          </Message>
                          <DateDivider>March 3, 2020</DateDivider>
                          <Message avatar="bot" name="Groovy" bot time="Today at 9:03 AM">
                            <Embed>{VOICE_ERROR}</Embed>
                          </Message>
                          <Message avatar={GREY} name="Laysa" time="Today at 9:03 AM">
                            <Line>-play happy birthday</Line>
                          </Message>
                        </MessageList>
                        <Track><Thumb /></Track>
                      </MessageArea>
                      <Composer>
                        <ComposerBox>
                          <ComposerPlus><FaPlusCircle size={20} /></ComposerPlus>
                          <ComposerText>Message #general</ComposerText>
                          <ComposerIcons>
                            <FaGift size={20} />
                            <GifIcon>GIF</GifIcon>
                            <FaGrin size={22} />
                          </ComposerIcons>
                        </ComposerBox>
                      </Composer>
                    </ChatMain>
                    <Members>
                      <MemberCategory>Online—4</MemberCategory>
                      <MemberRow>
                        <Clyde size={32} bg={BLURPLE}>
                          <Status $ring="#2f3136" $idle><FaMoon size={10} /></Status>
                        </Clyde>
                        <MemberName>diana_lyn</MemberName>
                      </MemberRow>
                      <MemberRow>
                        <Avatar $size={32} $bg="transparent">
                          <Boombox size={32} />
                          <Status $ring="#2f3136" />
                        </Avatar>
                        <MemberText>
                          <MemberName>Groovy <BotTag>BOT</BotTag></MemberName>
                          <MemberActivity>Listening to <b>-help</b></MemberActivity>
                        </MemberText>
                      </MemberRow>
                      <MemberRow>
                        <Clyde size={32} bg={BLURPLE}>
                          <Status $ring="#2f3136" />
                        </Clyde>
                        <MemberName>hacee</MemberName>
                      </MemberRow>
                      <MemberRow>
                        <Clyde size={32} bg={GREY}>
                          <Status $ring="#2f3136" />
                        </Clyde>
                        <MemberName>Laysa</MemberName>
                      </MemberRow>
                      <MemberCategory $top={24}>Offline—2</MemberCategory>
                      <MemberRow>
                        <Clyde size={32} bg={BLURPLE} dim />
                        <MemberName $dim>emz</MemberName>
                      </MemberRow>
                      <MemberRow>
                        <Clyde size={32} bg={RED} dim />
                        <MemberName $dim>sityel <CrownMark><FaCrown size={12} /></CrownMark></MemberName>
                      </MemberRow>
                    </Members>
                  </ChatBody>
                </Chat>
              </Columns>
            </Workspace>
          </Discord>
        </Browser>
      </Desktop>
    </Screen>
  );
}
